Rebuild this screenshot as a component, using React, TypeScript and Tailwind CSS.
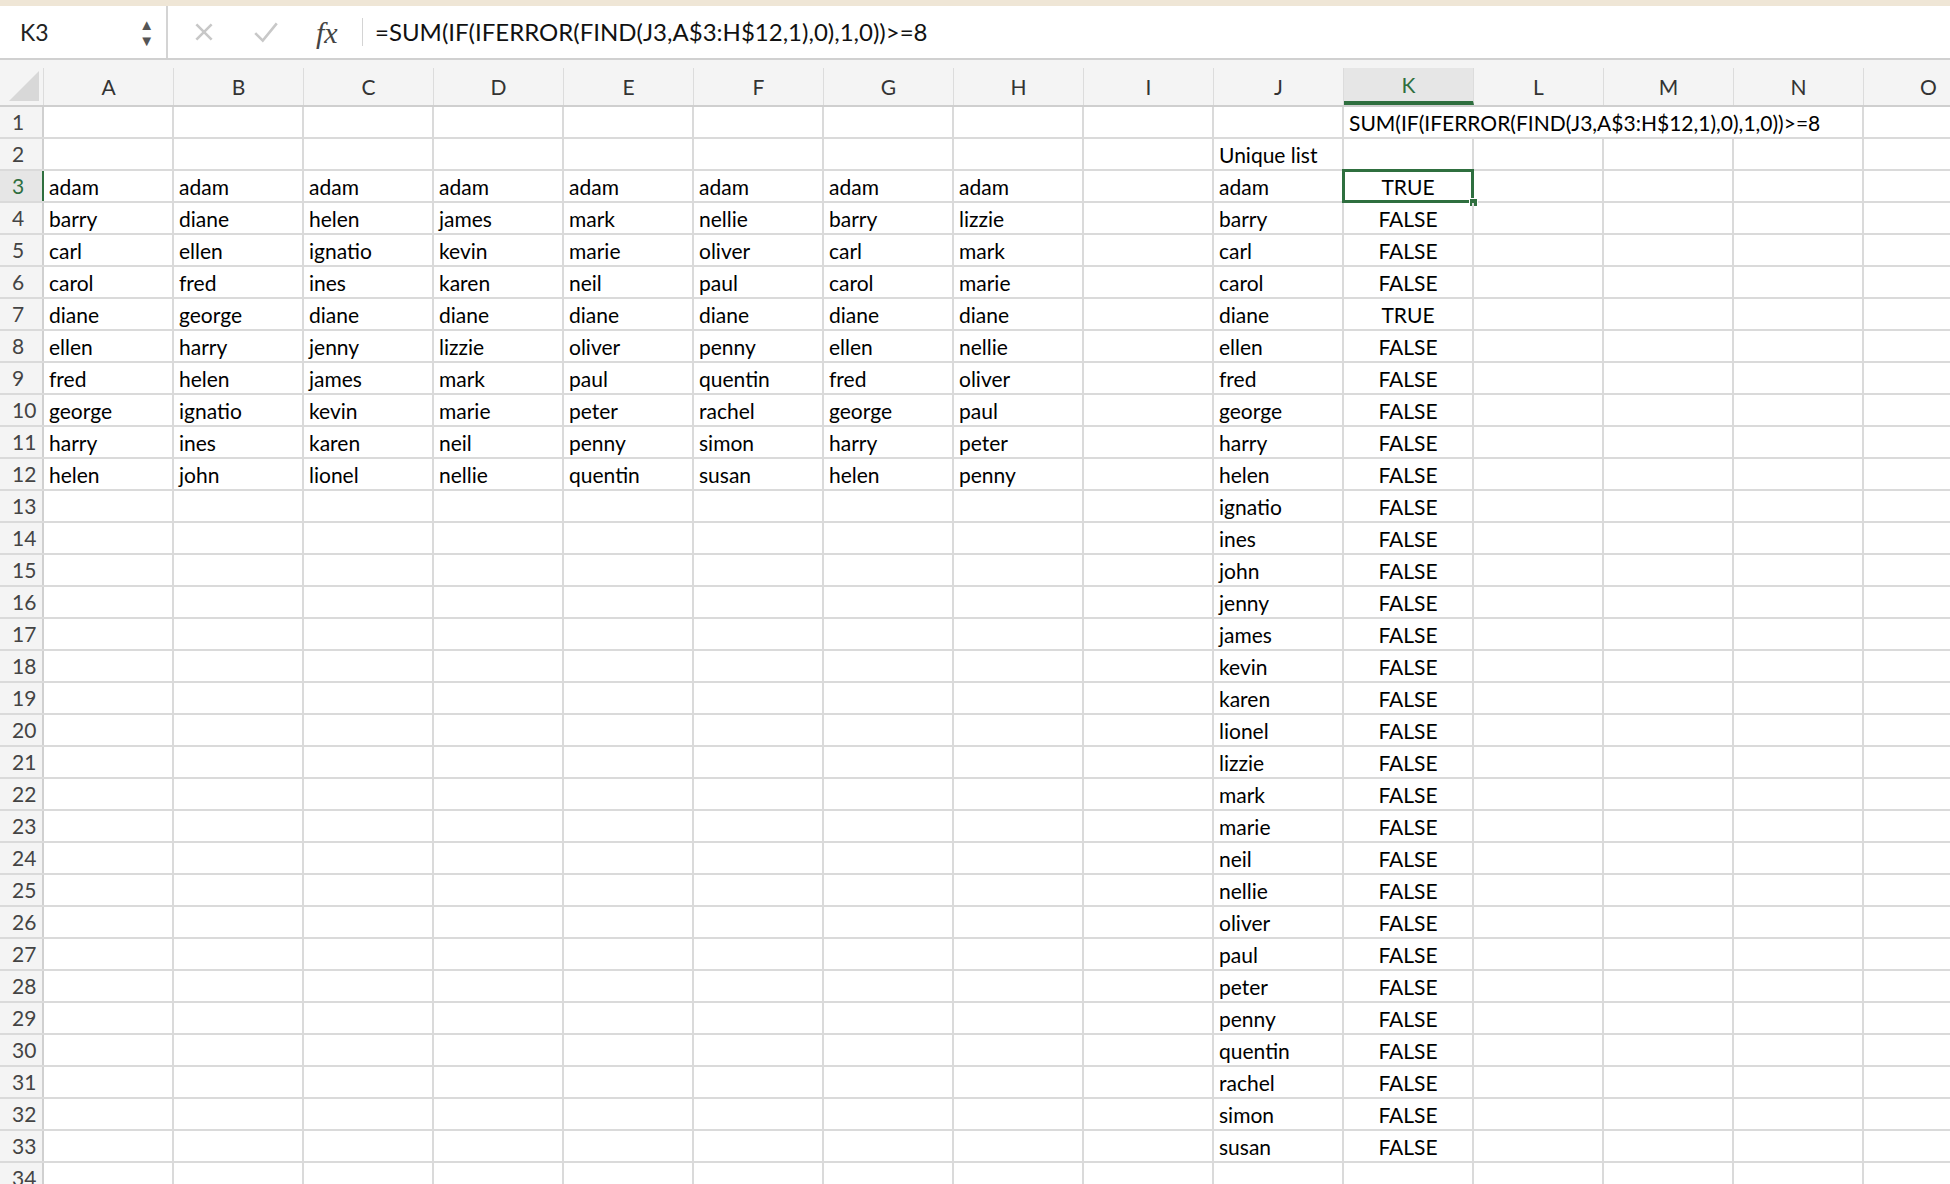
const cols = ["A", "B", "C", "D", "E", "F", "G", "H", "I", "J", "K", "L", "M", "N", "O"]

const data = [
  ["adam", "adam", "adam", "adam", "adam", "adam", "adam", "adam"],
  ["barry", "diane", "helen", "james", "mark", "nellie", "barry", "lizzie"],
  ["carl", "ellen", "ignatio", "kevin", "marie", "oliver", "carl", "mark"],
  ["carol", "fred", "ines", "karen", "neil", "paul", "carol", "marie"],
  ["diane", "george", "diane", "diane", "diane", "diane", "diane", "diane"],
  ["ellen", "harry", "jenny", "lizzie", "oliver", "penny", "ellen", "nellie"],
  ["fred", "helen", "james", "mark", "paul", "quentin", "fred", "oliver"],
  ["george", "ignatio", "kevin", "marie", "peter", "rachel", "george", "paul"],
  ["harry", "ines", "karen", "neil", "penny", "simon", "harry", "peter"],
  ["helen", "john", "lionel", "nellie", "quentin", "susan", "helen", "penny"],
]

const unique = [
  "adam", "barry", "carl", "carol", "diane", "ellen", "fred", "george", "harry", "helen",
  "ignatio", "ines", "john", "jenny", "james", "kevin", "karen", "lionel", "lizzie", "mark",
  "marie", "neil", "nellie", "oliver", "paul", "peter", "penny", "quentin", "rachel", "simon", "susan",
]

function cell(r: number, c: number): { text: string; center?: boolean } {
  if (r === 1 && c === 10) return { text: "SUM(IF(IFERROR(FIND(J3,A$3:H$12,1),0),1,0))>=8" }
  if (r === 2 && c === 9) return { text: "Unique list" }
  if (r >= 3 && r <= 12 && c < 8) return { text: data[r - 3][c] }
  if (r >= 3 && r <= 33 && c === 9) return { text: unique[r - 3] }
  if (r >= 3 && r <= 33 && c === 10) return { text: r === 3 || r === 7 ? "TRUE" : "FALSE", center: true }
  return { text: "" }
}

export default function App() {
  const rows = Array.from({ length: 34 }, (_, i) => i + 1)
  return (
    <div className="h-[1184px] w-[1950px] overflow-hidden bg-white text-[21px] text-black" style={{ fontFamily: "Lato, 'Open Sans', sans-serif" }}>
      <div className="h-[6px] bg-[#efe6d6]" />
      <div className="flex h-[54px] items-center border-b-2 border-[#d0d0d0] bg-white">
        <div className="flex h-full w-[168px] items-center justify-between border-r-2 border-[#d4d4d4] px-3 pl-5 text-[23px] text-[#222]">
          <span>K3</span>
          <span className="flex flex-col text-[15px] leading-[16px] text-[#555]">
            <span>▲</span>
            <span>▼</span>
          </span>
        </div>
        <div className="flex w-[190px] items-center gap-9 pl-6 text-[#c8c8c8]">
          <svg width="24" height="24" viewBox="0 0 22 22" stroke="currentColor" strokeWidth="2.4"><path d="M4 4l14 14M18 4L4 18" /></svg>
          <svg width="28" height="24" viewBox="0 0 26 22" stroke="currentColor" strokeWidth="2.4" fill="none"><path d="M3 12l7 7L23 3" /></svg>
          <span className="text-[30px] italic text-[#444]" style={{ fontFamily: "'Liberation Serif', serif" }}>fx</span>
        </div>
        <div className="ml-1 h-7 border-l border-[#d4d4d4]" />
        <div className="pl-3 text-[24px] text-[#111]">=SUM(IF(IFERROR(FIND(J3,A$3:H$12,1),0),1,0))&gt;=8</div>
      </div>
      <div className="flex h-[47px] border-b-2 border-[#cfcfcf] bg-[#f4f4f4] pt-[8px]">
        <div className="relative w-[44px] shrink-0 border-r border-[#dcdcdc]">
          <div className="absolute bottom-1 right-1 h-0 w-0 border-b-[30px] border-l-[30px] border-b-[#d8d8d8] border-l-transparent" />
        </div>
        {cols.map((c) => (
          <div key={c} className={`flex w-[130px] shrink-0 items-center justify-center border-r border-[#dcdcdc] ${c === "K" ? "border-b-4 border-b-[#2f6f3f] bg-[#e6e6e6] text-[#2f6f3f]" : "text-[#333]"}`}>
            {c}
          </div>
        ))}
      </div>
      {rows.map((r) => (
        <div key={r} className="flex h-[32px] border-b-2 border-[#dadada]">
          <div className={`w-[44px] shrink-0 border-r-2 pl-3 leading-[30px] ${r === 3 ? "border-[#2f6f3f] bg-[#e6e6e6] text-[#2f6f3f]" : "border-[#d0d0d0] bg-[#f4f4f4] text-[#444]"}`}>{r}</div>
          {cols.map((c, ci) => {
            const v = cell(r, ci)
            const sel = r === 3 && ci === 10
            return (
              <div key={c} className={`relative w-[130px] shrink-0 whitespace-nowrap px-[5px] leading-[31px] ${r === 1 && ci >= 10 && ci <= 12 ? "" : "border-r-2 border-[#dadada]"} ${v.center ? "text-center" : ""}`}>
                <span className={r === 1 && ci === 10 ? "relative z-10" : ""}>{v.text}</span>
                {sel && (
                  <>
                    <div className="absolute -left-[2px] -top-[2px] h-[34px] w-[132px] border-[3px] border-[#2f6f3f]" />
                    <div className="absolute -bottom-[6px] -right-[6px] h-[9px] w-[9px] border border-white bg-[#2f6f3f]" />
                  </>
                )}
              </div>
            )
          })}
        </div>
      ))}
    </div>
  )
}
